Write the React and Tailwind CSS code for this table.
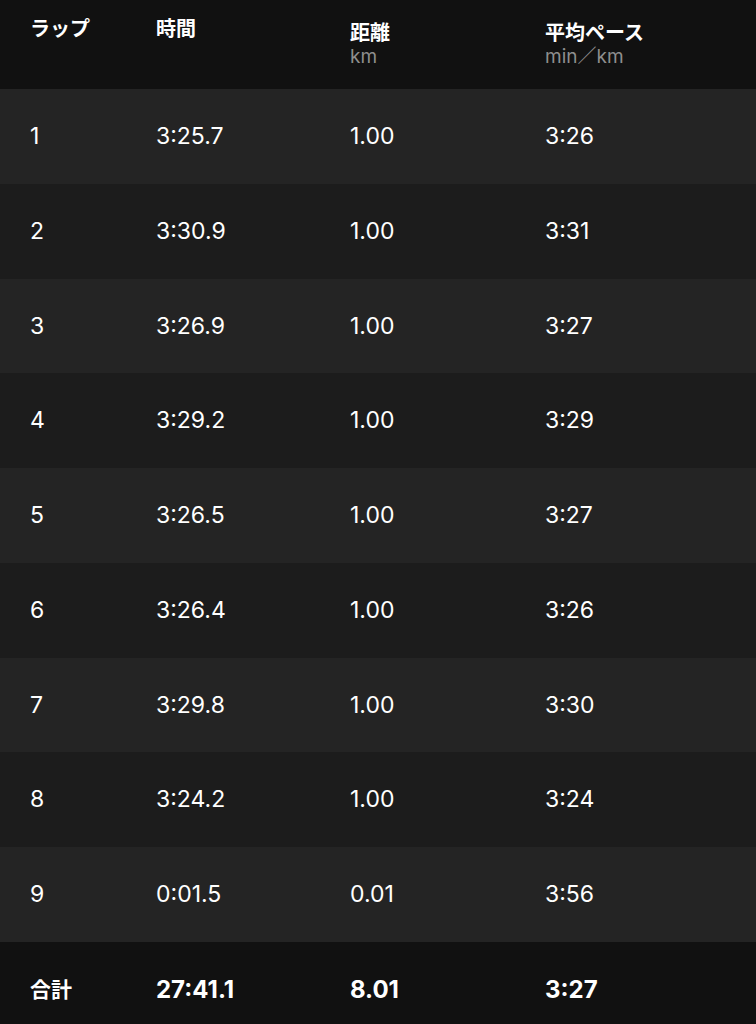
import React from "react";

const rows = [
  ["1", "3:25.7", "1.00", "3:26"],
  ["2", "3:30.9", "1.00", "3:31"],
  ["3", "3:26.9", "1.00", "3:27"],
  ["4", "3:29.2", "1.00", "3:29"],
  ["5", "3:26.5", "1.00", "3:27"],
  ["6", "3:26.4", "1.00", "3:26"],
  ["7", "3:29.8", "1.00", "3:30"],
  ["8", "3:24.2", "1.00", "3:24"],
  ["9", "0:01.5", "0.01", "3:56"],
];

const font = { fontFamily: 'Inter, "Noto Sans CJK JP", sans-serif' };

export default function App() {
  return (
    <div className="w-[756px] h-[1024px] bg-[#111111] text-white overflow-hidden" style={font}>
      <div className="h-[89px] bg-[#111111] grid grid-cols-[126px_194px_195px_1fr] pl-[30px] pt-[16px]">
        <div className="text-[20px] font-bold leading-[26px]">ラップ</div>
        <div className="text-[20px] font-bold leading-[26px]">時間</div>
        <div className="flex flex-col">
          <div className="text-[20px] font-bold leading-[26px] mt-[4px]">距離</div>
          <div className="text-[19px] leading-[22px] text-[#8e8e8e]">km</div>
        </div>
        <div className="flex flex-col">
          <div className="text-[20px] font-bold leading-[26px] mt-[4px]">平均ペース</div>
          <div className="text-[19px] leading-[22px] text-[#8e8e8e]">min／km</div>
        </div>
      </div>
      {rows.map((r, i) => (
        <div
          key={i}
          className={`${i % 2 === 0 ? "bg-[#242424]" : "bg-[#1c1c1c]"} h-[94.75px] grid grid-cols-[126px_194px_195px_1fr] items-center pl-[30px] text-[23px]`}
        >
          {r.map((c, j) => (
            <div key={j}>{c}</div>
          ))}
        </div>
      ))}
      <div className="h-[82px] bg-[#111111] grid grid-cols-[126px_194px_195px_1fr] items-center pl-[30px] pt-[14px] text-[24px] font-bold">
        <div className="text-[21px]">合計</div>
        <div>27:41.1</div>
        <div>8.01</div>
        <div>3:27</div>
      </div>
    </div>
  );
}
